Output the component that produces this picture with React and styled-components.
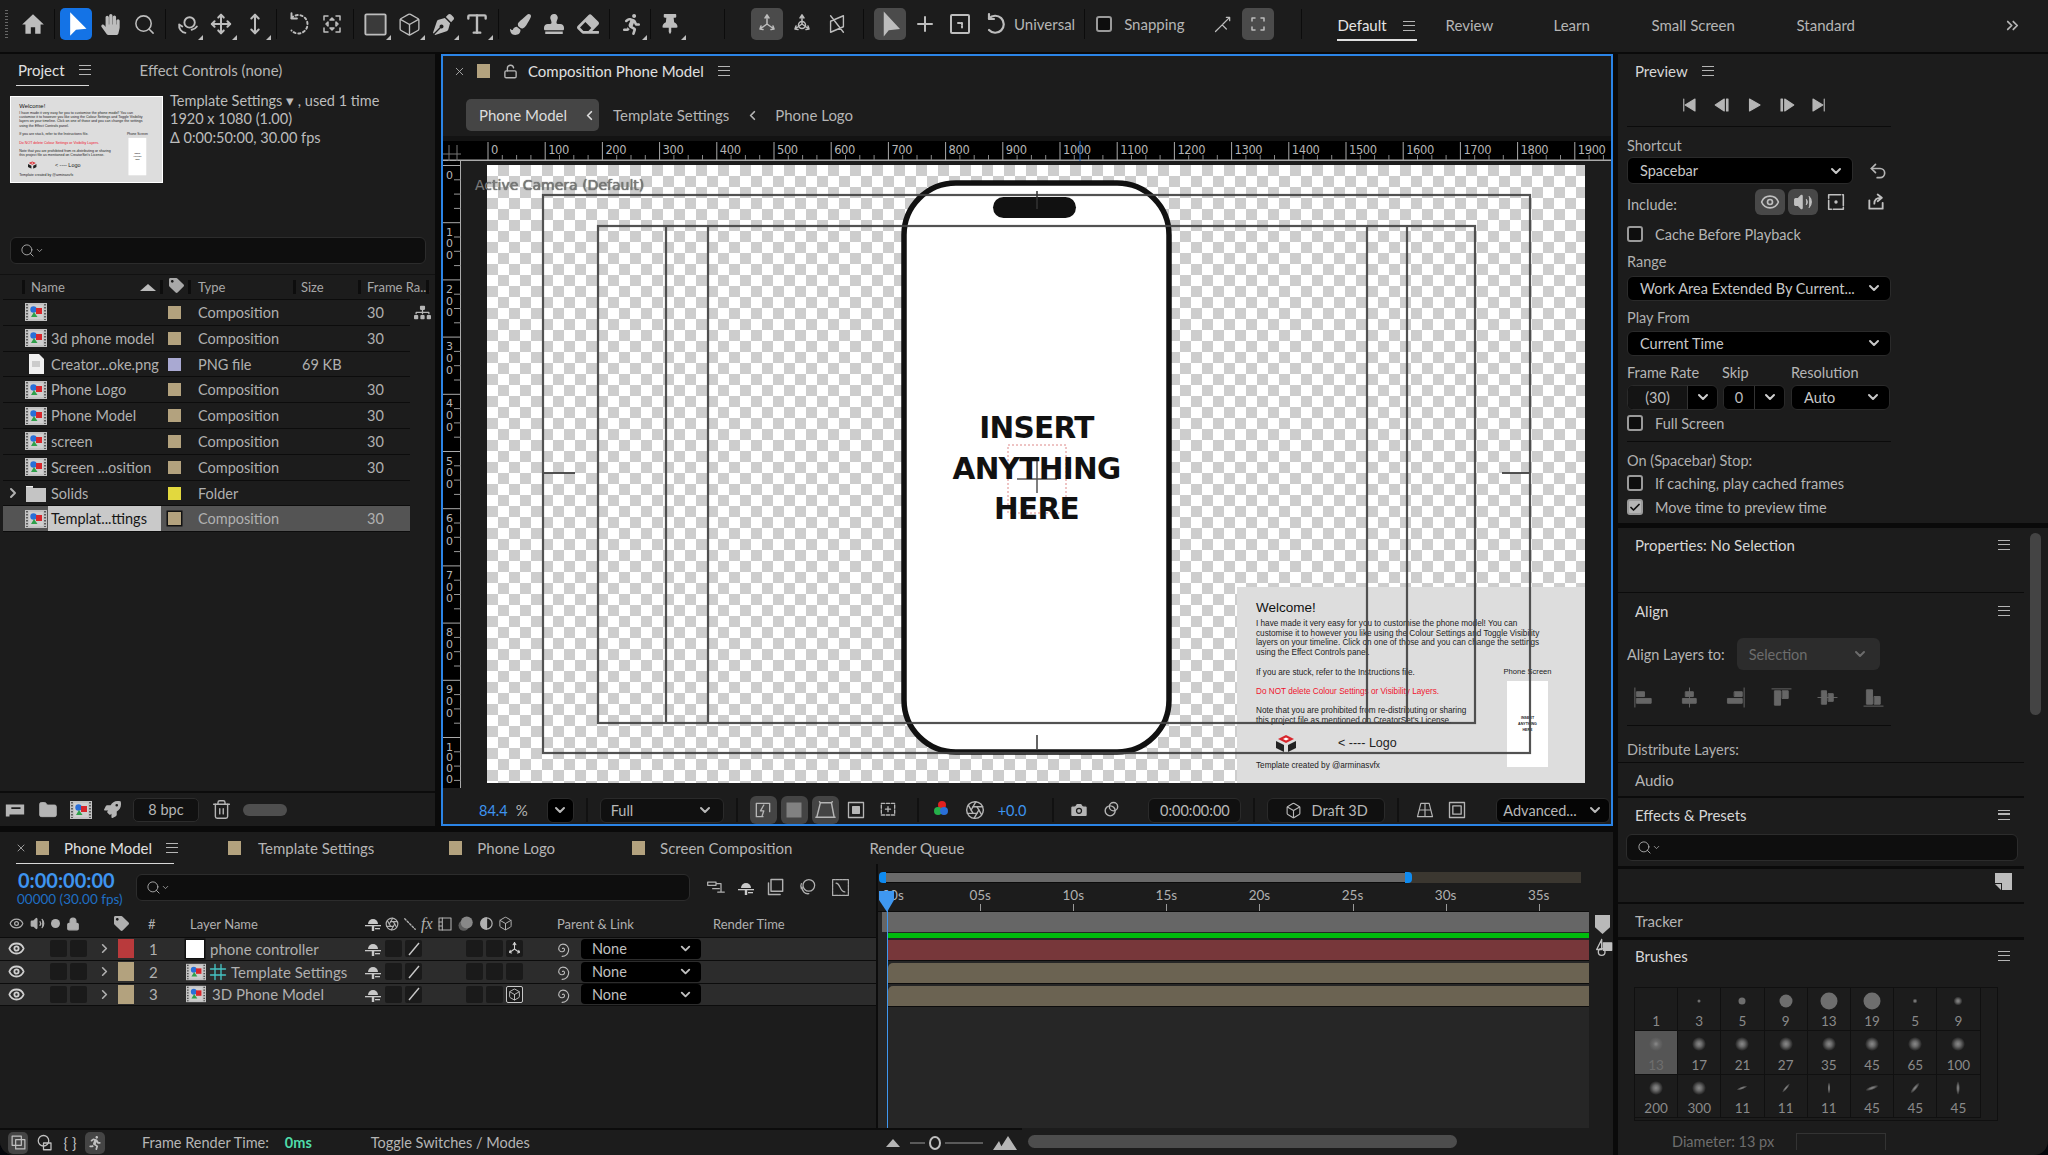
import React from 'react';
import styled, { createGlobalStyle } from 'styled-components';
import {
    Search, ChevronDown, ChevronRight, ChevronLeft, ChevronsRight, Move, MoveVertical, Box, Type, Plus,
    Undo2, Camera, Eye, Volume2, X, Lock, LockOpen, Check, Trash2, Folder, Aperture,
} from 'lucide-react';
import { FaHandPaper, FaPenNib, FaPaintBrush, FaStamp, FaEraser, FaThumbtack, FaRunning, FaTag, FaRocket, FaSitemap } from 'react-icons/fa';

const FONT = 'Lato, "Noto Sans", sans-serif';

const GlobalStyle = createGlobalStyle`
    html, body { margin: 0; padding: 0; background: #05070c; overflow: hidden; }
    * { box-sizing: border-box; }
    body { font-family: ${FONT}; font-size: 15px; color: #b9b9b9; }
`;

const Window = styled.div`
    width: 2048px;
    height: 1155px;
    display: flex;
    flex-direction: column;
    background: #0a0a0a;
    overflow: hidden;
    border-radius: 0 0 14px 14px;
`;

/* ---------- top toolbar ---------- */
const Toolbar = styled.div`
    height: 54px;
    flex: none;
    display: flex;
    align-items: center;
    padding-bottom: 4px;
    background: #1c1c1c;
    border-bottom: 2px solid #0a0a0a;
    color: #bdbdbd;
`;
const Gripper = styled.div`
    width: 3px;
    height: 28px;
    margin: 0 9px 0 5px;
    background: repeating-linear-gradient(#666 0 1px, transparent 1px 3px);
`;
const ToolGroup = styled.div`
    display: flex;
    align-items: center;
    gap: ${({ $gap }) => $gap || 2}px;
`;
const ToolSep = styled.div`
    width: 1px;
    height: 30px;
    background: #0c0c0c;
    margin: 0 ${({ $r }) => $r || 5}px 0 ${({ $l }) => $l || 5}px;
`;
const ToolBtn = styled.div`
    position: relative;
    width: 32px;
    height: 32px;
    flex: none;
    display: flex;
    align-items: center;
    justify-content: center;
    border-radius: 5px;
    margin-left: ${({ $l }) => $l || 0}px;
    color: ${({ $tone }) => ($tone === 'blue' ? '#fff' : '#bdbdbd')};
    background: ${({ $tone }) => ($tone === 'blue' ? '#1473e6' : $tone === 'on' ? '#4b4b4b' : 'transparent')};
    ${({ $fly }) => $fly && `
        &::after {
            content: '';
            position: absolute;
            right: 0;
            bottom: 0;
            border-style: solid;
            border-width: 0 0 5px 5px;
            border-color: transparent transparent #bdbdbd transparent;
        }
    `}
`;
const ToolText = styled.span`
    font-size: 15px;
    color: #b5b5b5;
    margin-left: ${({ $l }) => $l || 0}px;
`;
const Checkbox = styled.span`
    width: 16px;
    height: 16px;
    flex: none;
    display: inline-flex;
    align-items: center;
    justify-content: center;
    border: 2px solid #9a9a9a;
    border-radius: 3px;
    background: ${({ $on }) => ($on ? '#b5b5b5' : '#0e0e0e')};
    color: #111;
`;
const Workspaces = styled.div`
    display: flex;
    height: 52px;
    align-items: center;
    position: relative;
    flex: 1;
    margin-top: 4px;
`;
const WsTab = styled.div`
    position: absolute;
    top: 16px;
    left: ${({ $x }) => $x}px;
    font-size: 15px;
    white-space: nowrap;
    color: ${({ $on }) => ($on ? '#e4e4e4' : '#b5b5b5')};
`;
const WsUnderline = styled.div`
    position: absolute;
    left: 30px;
    top: 39px;
    width: 80px;
    height: 2px;
    background: #e0e0e0;
`;

const Burger = styled.span`
    display: inline-block;
    flex: none;
    width: 12px;
    height: 10px;
    border-top: 1.5px solid #b5b5b5;
    border-bottom: 1.5px solid #b5b5b5;
    position: relative;
    margin-left: ${({ $l }) => $l || 0}px;
    &::after {
        content: '';
        position: absolute;
        left: 0;
        right: 0;
        top: 2.75px;
        height: 1.5px;
        background: #b5b5b5;
    }
`;

/* ---------- main layout ---------- */
const Workspace = styled.div`
    flex: 1;
    display: flex;
    gap: 5px;
    min-height: 0;
`;
const LeftStack = styled.div`
    width: 1613px;
    flex: none;
    display: flex;
    flex-direction: column;
    gap: 6px;
`;
const TopRow = styled.div`
    height: 772px;
    flex: none;
    display: flex;
    gap: 6px;
`;

/* ---------- project panel ---------- */
const ProjectPanel = styled.section`
    width: 435px;
    flex: none;
    background: #1c1c1c;
    display: flex;
    flex-direction: column;
    position: relative;
`;
const TabStrip = styled.div`
    height: ${({ $h }) => $h || 32}px;
    flex: none;
    display: flex;
    align-items: center;
    position: relative;
`;
const TabLabel = styled.span`
    font-size: 15px;
    white-space: nowrap;
    color: ${({ $on }) => ($on ? '#e0e0e0' : '#b5b5b5')};
    margin-left: ${({ $l }) => $l || 0}px;
`;
const TabUnderline = styled.div`
    position: absolute;
    bottom: 0;
    left: ${({ $x }) => $x}px;
    width: ${({ $w }) => $w}px;
    height: 1.5px;
    background: #d8d8d8;
`;
const InfoRow = styled.div`
    display: flex;
    height: 151px;
    flex: none;
    padding: 10px 0 0 10px;
`;
const Thumb = styled.div`
    width: 153px;
    height: 87px;
    flex: none;
    overflow: hidden;
    border: 1.5px solid #fff;
    background: #ddd;
`;
const ThumbScale = styled.div`
    transform: scale(0.435);
    transform-origin: 0 0;
`;
const InfoText = styled.div`
    margin: -4px 0 0 7px;
    font-size: 14.5px;
    line-height: 18.3px;
    color: #bdbdbd;
`;
const SearchBox = styled.div`
    height: 27px;
    flex: none;
    margin: ${({ $m }) => $m || '0 9px 0 10px'};
    width: ${({ $w }) => ($w ? `${$w}px` : 'auto')};
    display: flex;
    align-items: center;
    padding-left: ${({ $p }) => $p || 9}px;
    background: #0e0e0e;
    border: 1.5px solid #2c2c2c;
    border-radius: 6px;
    color: #b5b5b5;
`;
const FileHead = styled.div`
    height: 25px;
    margin-top: 10px;
    flex: none;
    position: relative;
    font-size: 13px;
    color: #a8a8a8;
    border-top: 1px solid #111;
`;
const HeadCell = styled.span`
    position: absolute;
    top: ${({ $t }) => $t || 4}px;
    left: ${({ $x }) => $x}px;
    display: inline-flex;
    align-items: center;
    white-space: nowrap;
`;
const HeadBar = styled.span`
    position: absolute;
    top: 5px;
    left: ${({ $x }) => $x}px;
    width: 3px;
    height: 14px;
    background: #0d0d0d;
`;
const FileList = styled.div`
    width: 407px;
    margin-left: 3px;
    flex: none;
    border-top: 1px solid #0c0c0c;
`;
const FileRow = styled.div`
    height: 25.8px;
    display: grid;
    grid-template-columns: 20px 25px 113px 7px 14px 16px 104px 65px 43px;
    align-items: center;
    border-bottom: 1px solid #0c0c0c;
    font-size: 14.5px;
    color: #b0b0b0;
    background: ${({ $sel }) => ($sel ? '#545454' : 'transparent')};
`;
const FileCell = styled.span`
    display: flex;
    justify-content: ${({ $center }) => ($center ? 'center' : 'flex-start')};
    padding-left: ${({ $p }) => $p || 0}px;
`;
const FileName = styled.span`
    display: block;
    height: 100%;
    line-height: 25px;
    white-space: nowrap;
    padding-left: 3px;
    background: ${({ $sel }) => ($sel ? '#c9c9c9' : 'transparent')};
    color: ${({ $sel }) => ($sel ? '#161616' : '#b0b0b0')};
`;
const Swatch = styled.span`
    display: block;
    flex: none;
    width: ${({ $w }) => $w || 13}px;
    height: ${({ $h }) => $h || 13}px;
    margin-left: ${({ $l }) => $l || 0}px;
    background: ${({ $c }) => $c};
    border-radius: ${({ $round }) => ($round ? '50%' : 0)};
    box-shadow: ${({ $dark }) => ($dark ? '0 0 0 1.5px #111' : 'none')};
`;
const HierIcon = styled.span`
    position: absolute;
    right: 4px;
    top: 250px;
    color: #b5b5b5;
    display: flex;
`;
const ProjectFoot = styled.div`
    margin-top: auto;
    height: 35px;
    flex: none;
    display: flex;
    align-items: center;
    padding-left: 4px;
    gap: 12px;
    border-top: 2px solid #0c0c0c;
    color: #b5b5b5;
`;
const BpcBox = styled.span`
    width: 66px;
    height: 24px;
    border: 1.5px solid #2c2c2c;
    border-radius: 5px;
    background: #111;
    text-align: center;
    line-height: 21px;
    font-size: 14.5px;
`;
const PillSlider = styled.span`
    width: 44px;
    height: 12px;
    border-radius: 6px;
    background: #4e4e4e;
    margin-left: -1px;
`;

/* ---------- composition panel ---------- */
const CompPanel = styled.section`
    flex: 1;
    min-width: 0;
    display: flex;
    flex-direction: column;
    border: 2px solid #2b84e6;
    background: #1c1c1c;
`;
const CompHead = styled.div`
    height: 38px;
    flex: none;
    display: flex;
    align-items: center;
    padding: 0 0 8px 10px;
    color: #b5b5b5;
`;
const Crumbs = styled.div`
    height: 42px;
    flex: none;
    display: flex;
    align-items: center;
    padding-left: 23px;
    font-size: 15px;
    color: #b5b5b5;
`;
const CrumbChip = styled.div`
    width: 133px;
    height: 32px;
    display: flex;
    align-items: center;
    justify-content: space-between;
    padding: 0 2px 0 13px;
    border-radius: 5px;
    background: #454545;
    color: #dcdcdc;
`;
const RulerGap = styled.div`
    height: 5px;
    flex: none;
    background: #131313;
`;
const RulerBar = styled.svg`
    display: block;
    flex: none;
    background: #000;
`;
const ViewRow = styled.div`
    height: 627px;
    flex: none;
    display: flex;
`;
const ViewArea = styled.div`
    position: relative;
    flex: 1;
    padding: 4px 0 0 26px;
`;
const Canvas = styled.div`
    position: relative;
    width: 1098px;
    height: 618px;
    background: conic-gradient(#cdcdcd 25%, #fff 0 50%, #cdcdcd 0 75%, #fff 0) 0 0 / 22px 22px;
`;
const CameraLabel = styled.div`
    position: absolute;
    left: 14px;
    top: 16px;
    font: 14px "DejaVu Sans", sans-serif;
    color: #7a7a7a;
    text-shadow: 0 0 1px #333;
    white-space: nowrap;
`;
const CardSpot = styled.div`
    position: absolute;
    left: 750px;
    top: 422px;
`;
const Card = styled.div`
    width: 348px;
    height: 196px;
    padding: 12px 0 0 19px;
    display: grid;
    grid-template-columns: 251px 41px;
    background: #ddd;
    font-family: "Liberation Sans", Arial, sans-serif;
    color: #222;
`;
const CardTitle = styled.div`
    font-size: 13.5px;
    line-height: 17px;
    color: #111;
    margin-bottom: 3px;
`;
const CardText = styled.p`
    margin: 0 0 9.7px;
    width: 320px;
    font-size: 8.2px;
    line-height: 9.7px;
    white-space: nowrap;
    color: ${({ $red }) => ($red ? '#f0142d' : '#222')};
`;
const CardLogo = styled.div`
    display: flex;
    align-items: center;
    margin-top: -3px;
    height: 22px;
    padding-left: 20px;
    font-size: 12.5px;
    color: #222;
    gap: 42px;
`;
const CardFoot = styled.div`
    margin-top: 7px;
    font-size: 8.2px;
`;
const CardSide = styled.div`
    padding-top: 68px;
    text-align: center;
    grid-column: 2;
    grid-row: 1;
`;
const SideLabel = styled.div`
    font-size: 7.6px;
    white-space: nowrap;
    margin: 0 -10px 5px;
    line-height: 9px;
`;
const SideScreen = styled.div`
    width: 41px;
    height: 86px;
    background: #fff;
    display: flex;
    align-items: center;
    justify-content: center;
    font-size: 3.6px;
    line-height: 6px;
    font-weight: 700;
    color: #222;
`;
const CardMain = styled.div`
    grid-column: 1;
    grid-row: 1;
`;
const Wire = styled.svg`
    position: absolute;
    left: 0;
    top: 0;
`;
const InsertText = styled.div`
    position: absolute;
    left: 417px;
    top: 243px;
    width: 265px;
    text-align: center;
    font: 700 29.5px/40.5px "DejaVu Sans", sans-serif;
    letter-spacing: -0.7px;
    color: #111;
`;
const CompBar = styled.div`
    height: 36px;
    flex: none;
    display: flex;
    align-items: center;
    padding-top: 8px;
    color: #b5b5b5;
    font-size: 15px;
`;
const BlueNum = styled.span`
    color: #3e94ef;
    font-size: 14.5px;
    margin-left: ${({ $l }) => $l || 0}px;
`;
const BarText = styled.span`
    margin-left: ${({ $l }) => $l || 0}px;
`;
const DarkBox = styled.div`
    width: ${({ $w }) => $w}px;
    height: 25px;
    flex: none;
    display: flex;
    align-items: center;
    justify-content: ${({ $j }) => $j || 'space-between'};
    gap: 6px;
    padding: 0 ${({ $p }) => ($p === undefined ? 10 : $p)}px;
    margin-left: ${({ $l }) => $l || 0}px;
    border: 1.5px solid #2a2a2a;
    border-radius: 6px;
    background: ${({ $bg }) => $bg || '#101010'};
    color: #b8b8b8;
    font-size: 14.5px;
    white-space: nowrap;
`;
const BarSep = styled.div`
    width: 2px;
    height: 24px;
    flex: none;
    background: #111;
    margin-left: ${({ $l }) => $l || 12}px;
`;
const BarBtn = styled.div`
    width: 27px;
    height: 28px;
    flex: none;
    display: flex;
    align-items: center;
    justify-content: center;
    border-radius: 6px;
    margin-left: ${({ $l }) => $l || 4}px;
    background: ${({ $on }) => ($on ? '#444' : 'transparent')};
    color: #b5b5b5;
`;

/* ---------- timeline ---------- */
const Timeline = styled.section`
    flex: 1;
    min-height: 0;
    display: flex;
    flex-direction: column;
    background: #1c1c1c;
`;
const TlSwatch = styled.span`
    width: 13px;
    height: 14px;
    flex: none;
    background: #b3a27e;
    margin-left: ${({ $l }) => $l || 0}px;
`;
const TlBody = styled.div`
    flex: 1;
    min-height: 0;
    display: flex;
`;
const TlLeft = styled.div`
    width: 878px;
    flex: none;
    display: flex;
    flex-direction: column;
    border-right: 2px solid #0c0c0c;
`;
const TimeRow = styled.div`
    height: 46px;
    flex: none;
    display: flex;
    align-items: center;
`;
const TimeBlock = styled.div`
    width: 136px;
    flex: none;
    padding: 2px 0 0 17px;
`;
const BigTime = styled.div`
    font-size: 20px;
    line-height: 22px;
    font-weight: 700;
    color: #3e94ef;
    padding-left: 1px;
`;
const SubTime = styled.div`
    font-size: 13.5px;
    line-height: 16px;
    color: #1f6fc4;
`;
const ColHead = styled.div`
    height: 28px;
    flex: none;
    display: flex;
    align-items: center;
    font-size: 13px;
    color: #a8a8a8;
    border-bottom: 1.5px solid #0c0c0c;
`;
const Sect = styled.div`
    width: ${({ $w }) => $w}px;
    flex: none;
    height: 100%;
    display: flex;
    align-items: center;
    gap: ${({ $gap }) => $gap || 0}px;
    padding-left: ${({ $p }) => $p || 0}px;
    white-space: nowrap;
    color: #b0b0b0;
`;
const LayerRow = styled.div`
    height: 22.8px;
    flex: none;
    display: flex;
    align-items: center;
    background: #2c2c2c;
    border-bottom: 1.5px solid #0c0c0c;
    font-size: 15px;
`;
const Slot = styled.span`
    width: 17px;
    height: 17px;
    flex: none;
    display: inline-flex;
    align-items: center;
    justify-content: center;
    background: #1a1a1a;
    border-radius: 2px;
    margin-left: ${({ $l }) => $l || 0}px;
    color: #cfcfcf;
    ${({ $boxed }) => $boxed && 'border: 1.5px solid #c8c8c8;'}
`;
const NoneSelect = styled.div`
    width: 120px;
    height: 20px;
    margin-left: 9px;
    display: flex;
    align-items: center;
    justify-content: space-between;
    padding: 0 8px 0 11px;
    border-radius: 4px;
    background: #000;
    color: #c0c0c0;
    font-size: 14.5px;
`;
const LayerName = styled.span`
    margin-left: ${({ $l }) => $l || 0}px;
`;
const Fx = styled.i`
    font-family: "Liberation Serif", serif;
    font-size: 16px;
`;
const Graph = styled.div`
    flex: 1;
    display: flex;
    position: relative;
    min-width: 0;
`;
const GraphTrack = styled.div`
    width: 711px;
    flex: none;
    display: flex;
    flex-direction: column;
    background: #262626;
    overflow: hidden;
`;
const NavShelf = styled.div`
    height: 19px;
    flex: none;
    background: #1c1c1c;
`;
const NavStrip = styled.div`
    position: relative;
    height: 11px;
    top: 8px;
    margin: 0 8px 0 3px;
    background: #3b3730;
`;
const NavFill = styled.div`
    height: 100%;
    width: 524px;
    background: #6a6a6a;
    border-top: 1px solid #0c0c0c;
    border-bottom: 1px solid #0c0c0c;
`;
const NavHandle = styled.span`
    position: absolute;
    left: ${({ $x }) => $x}px;
    top: 0;
    width: 7px;
    height: 11px;
    background: #0f8bf0;
    border-radius: ${({ $r }) => ($r ? '0 4px 4px 0' : '4px 0 0 4px')};
`;
const TimeLabels = styled.div`
    display: flex;
    height: 29px;
    flex: none;
    margin-left: -37.5px;
    background: #1c1c1c;
    border-bottom: 1.5px solid #0c0c0c;
`;
const TimeLabel = styled.div`
    width: 93.1px;
    flex: none;
    text-align: center;
    font-size: 13.5px;
    line-height: 25px;
    height: 28px;
    padding-left: ${({ $first }) => ($first ? 12 : 0)}px;
    color: #b0b0b0;
    position: relative;
    &::after {
        content: '';
        position: absolute;
        left: 50%;
        bottom: 0;
        width: 1px;
        height: 7px;
        background: #999;
    }
`;
const WorkBar = styled.div`
    height: 20px;
    flex: none;
    margin-left: 4px;
    background: #666;
    position: relative;
`;
const GreenBar = styled.div`
    height: 5px;
    margin-top: 1px;
    flex: none;
    margin-left: 9px;
    background: #00bb0c;
`;
const LayerBar = styled.div`
    height: 21px;
    flex: none;
    margin: 2px 0 0 10px;
    background: ${({ $c }) => $c};
    border-bottom: 1px solid #0c0c0c;
    border-top-left-radius: ${({ $round }) => ($round ? 5 : 0)}px;
`;
const Playhead = styled.div`
    position: absolute;
    left: 9px;
    top: 26px;
    width: 1px;
    bottom: 0;
    background: #3f97f0;
`;
const PlayheadCap = styled.svg`
    position: absolute;
    left: 1px;
    top: 27px;
`;
const SideMarks = styled.div`
    flex: 1;
    padding: 51px 0 0 6px;
    color: #c0c0c0;
`;
const Marker = styled.div`
    width: 15px;
    height: 19px;
    background: #b9b9b9;
    clip-path: polygon(0 0, 100% 0, 100% 65%, 50% 100%, 0 65%);
    margin-bottom: 3px;
`;
const TlFoot = styled.div`
    height: 27px;
    flex: none;
    display: flex;
    align-items: center;
    background: #1c1c1c;
`;
const FootLeft = styled.div`
    width: 1022px;
    height: 100%;
    flex: none;
    display: flex;
    align-items: center;
    border-top: 2px solid #0c0c0c;
    font-size: 14.5px;
    color: #b5b5b5;
`;
const FootBtn = styled.span`
    width: 20px;
    height: 22px;
    flex: none;
    display: inline-flex;
    align-items: center;
    justify-content: center;
    border-radius: 5px;
    margin-left: ${({ $l }) => $l || 5}px;
    background: ${({ $on }) => ($on ? '#454545' : 'transparent')};
    color: #c0c0c0;
    font-size: 15px;
`;
const GreenNum = styled.span`
    color: #4fdcaa;
    font-weight: 700;
    margin-left: 16px;
`;
const ZoomSmall = styled.svg`
    margin-left: 356px;
    flex: none;
`;
const ZoomBig = styled.svg`
    margin-left: 10px;
    flex: none;
`;
const ZoomTrack = styled.span`
    height: 2px;
    width: ${({ $w }) => $w}px;
    background: #5a5a5a;
    margin-left: ${({ $l }) => $l || 4}px;
`;
const ZoomKnob = styled.span`
    width: 12px;
    height: 14px;
    border: 2.5px solid #c0c0c0;
    border-radius: 50%;
    margin-left: 4px;
`;
const ScrollPill = styled.div`
    width: 429px;
    height: 13px;
    margin-left: 6px;
    border-radius: 7px;
    background: #4d4d4d;
`;

/* ---------- right dock ---------- */
const RightDock = styled.aside`
    flex: 1;
    min-width: 0;
    display: flex;
    flex-direction: column;
    gap: 5px;
`;
const DockSection = styled.section`
    background: #1c1c1c;
    flex: ${({ $grow }) => ($grow ? 1 : 'none')};
    height: ${({ $h }) => ($h ? `${$h}px` : 'auto')};
    min-height: 0;
    padding-left: ${({ $p }) => $p || 0}px;
    position: relative;
    font-size: 14.5px;
    color: #b5b5b5;
`;
const PanelHead = styled.div`
    height: ${({ $h }) => $h || 34}px;
    display: flex;
    align-items: center;
    justify-content: space-between;
    padding: 0 14px 0 ${({ $p }) => $p || 17}px;
    font-size: 15px;
    color: ${({ $dim }) => ($dim ? '#b5b5b5' : '#d6d6d6')};
`;
const PanelHeadLeft = styled.div`
    display: flex;
    align-items: center;
`;
const Transport = styled.div`
    height: 38px;
    display: flex;
    align-items: center;
    gap: 14.5px;
    padding: 0 0 5px 53px;
    color: #b5b5b5;
`;
const Rule = styled.div`
    width: ${({ $w }) => ($w ? `${$w}px` : 'auto')};
    height: ${({ $t }) => $t || 1}px;
    margin-top: ${({ $mt }) => $mt || 0}px;
    background: #0b0b0b;
`;
const Label = styled.div`
    height: 18px;
    line-height: 18px;
    margin-top: ${({ $mt }) => $mt || 0}px;
    color: #b0b0b0;
    white-space: nowrap;
`;
const PickBox = styled.div`
    width: ${({ $w }) => $w}px;
    height: ${({ $h }) => $h || 26}px;
    margin-top: ${({ $mt }) => $mt || 0}px;
    margin-left: ${({ $l }) => $l || 0}px;
    flex: none;
    display: flex;
    align-items: center;
    justify-content: space-between;
    padding: 0 8px 0 12px;
    border: 1.5px solid #2a2a2a;
    border-radius: 6px;
    background: #000;
    color: #c8c8c8;
    white-space: nowrap;
`;
const FlexRow = styled.div`
    display: flex;
    align-items: center;
    height: ${({ $h }) => $h || 24}px;
    margin-top: ${({ $mt }) => $mt || 0}px;
    gap: ${({ $gap }) => $gap || 0}px;
`;
const RowCaption = styled.span`
    width: ${({ $w }) => $w}px;
    padding-top: ${({ $t }) => $t || 0}px;
    flex: none;
`;
const ToggleBtn = styled.div`
    width: 30px;
    height: 26px;
    display: flex;
    align-items: center;
    justify-content: center;
    border-radius: 6px;
    margin-left: ${({ $l }) => $l || 0}px;
    background: ${({ $on }) => ($on ? '#484848' : 'transparent')};
    color: #c0c0c0;
`;
const CheckLabel = styled.span`
    margin-left: 12px;
`;
const SplitBox = styled.div`
    width: ${({ $w }) => $w}px;
    height: 25px;
    flex: none;
    display: grid;
    grid-template-columns: ${({ $left }) => $left}px 1fr;
    border: 1.5px solid #2a2a2a;
    border-radius: 6px;
    background: #000;
    overflow: hidden;
    margin-left: ${({ $l }) => $l || 0}px;
    color: #bdbdbd;
`;
const SplitValue = styled.span`
    display: flex;
    align-items: center;
    justify-content: center;
    background: ${({ $bg }) => $bg || '#141414'};
    border-right: 1px solid #333;
`;
const SplitArrow = styled.span`
    display: flex;
    align-items: center;
    justify-content: center;
    color: #d0d0d0;
`;
const LowerDock = styled.div`
    display: flex;
    flex-direction: column;
    width: 406px;
    height: 100%;
`;
const ScrollThumb = styled.div`
    position: absolute;
    left: 412px;
    top: 5px;
    width: 11px;
    height: 182px;
    border-radius: 6px;
    background: #444;
`;
const Indent = styled.div`
    padding-left: 9px;
`;
const MutedSelect = styled.div`
    width: 143px;
    height: 32px;
    margin-left: 12px;
    display: flex;
    align-items: center;
    justify-content: space-between;
    padding: 0 12px;
    border-radius: 6px;
    background: #2c2c2c;
    color: #6c6c6c;
`;
const AlignIcons = styled.div`
    display: flex;
    gap: 23px;
    height: 30px;
    align-items: center;
    margin-top: 12px;
    padding-left: 5px;
    color: #666;
`;
const PresetStrip = styled.div`
    height: 33px;
    display: flex;
    align-items: center;
    justify-content: flex-end;
    padding: 0 12px 8px 0;
    color: #c0c0c0;
`;
const BrushGrid = styled.div`
    width: 364px;
    margin: 15px 0 0 16px;
    height: 134px;
    display: grid;
    grid-template-columns: repeat(8, 43.2px);
    grid-auto-rows: 43.3px;
    border: 1px solid #101010;
    background: #1c1c1c;
`;
const BrushCell = styled.div`
    position: relative;
    border-right: 1px solid #101010;
    border-bottom: 1px solid #101010;
    background: ${({ $sel }) => ($sel ? '#555' : 'transparent')};
`;
const BrushDot = styled.span`
    position: absolute;
    left: 50%;
    top: 13px;
    width: ${({ $w }) => $w}px;
    height: ${({ $h }) => $h}px;
    transform: translate(-50%, -50%) rotate(${({ $rot }) => $rot || 0}deg);
    border-radius: 50%;
    background: ${({ $soft }) => ($soft ? 'radial-gradient(closest-side, #8a8a8a, #6a6a6a 40%, transparent)' : '#6e6e6e')};
`;
const BrushNum = styled.span`
    position: absolute;
    left: 0;
    right: 0;
    bottom: 1px;
    text-align: center;
    font-size: 13.5px;
    line-height: 16px;
    color: ${({ $sel }) => ($sel ? '#6e6e6e' : '#8a8a8a')};
`;
const DiameterRow = styled.div`
    display: flex;
    align-items: flex-start;
    margin-top: 12px;
    padding-left: 54px;
    color: #6e6e6e;
`;
const DiameterBox = styled.div`
    width: 90px;
    height: 17px;
    margin-left: 22px;
    border: 1px solid #333;
    border-bottom: 0;
`;

/* ---------- small drawings ---------- */
const Ico = ({ s = 22, sw = 1.8, fill = 'none', children }) => (
    <svg width={s} height={s} viewBox="0 0 24 24" fill={fill} stroke={fill === 'none' ? 'currentColor' : 'none'} strokeWidth={sw} strokeLinecap="round" strokeLinejoin="round">
        {children}
    </svg>
);
const Filled = ({ s, d }) => <Ico s={s} fill="currentColor"><path d={d} /></Ico>;

const CompIcon = ({ w = 22, h = 18 }) => (
    <svg width={w} height={h} viewBox="0 0 22 18">
        <rect width="22" height="18" fill="#c2c2c2" />
        <path d="M2 1v16M20 1v16" stroke="#444" strokeWidth="1.6" strokeDasharray="1.5 1.5" />
        <rect x="4" y="2" width="14" height="14" fill="#cfcfcf" />
        <circle cx="8.5" cy="6.5" r="3.2" fill="#2a6fd8" />
        <rect x="11" y="5" width="6" height="6" fill="#d8262c" />
        <path d="M6 14 l3 -5 l3.5 5z" fill="#2fa04a" />
    </svg>
);
const FileIcon = () => (
    <svg width="16" height="20" viewBox="0 0 16 20">
        <path d="M1 0h10l5 5v15H1z" fill="#f0f0f0" />
        <rect x="4" y="7" width="8" height="6" fill="#ccc" />
    </svg>
);
const FolderIcon = () => (
    <svg width="20" height="17" viewBox="0 0 20 17">
        <path d="M0 2h7v1h13v14H0z" fill="#c4c4c4" />
        <path d="M0 1h7v1H0z" fill="#eee" />
    </svg>
);
const AxisIcon = ({ ring }) => (
    <Ico s={24} sw={1.5}>
        <path d="M12 3v9M12 12l-7 5M12 12l7 5M12 3l-2 3M12 3l2 3M5 17l1-3M5 17l3 .6M19 17l-1-3M19 17l-3 .6" />
        {ring && <circle cx="12" cy="13" r="3.5" />}
    </Ico>
);
const ShyIcon = () => (
    <svg width="16" height="15" viewBox="0 0 16 15" fill="#c8c8c8">
        <path d="M3 8a5 5 0 0 1 10 0z" />
        <rect x="0" y="9" width="16" height="1.3" />
        <rect x="6.8" y="10" width="2.4" height="5" />
        <rect x="10" y="12" width="5" height="1.3" />
    </svg>
);
const SpiralIcon = () => (
    <Ico s={19} sw={1.4}>
        <path d="M12 12c1-1 3 0 2.5 2-.5 2.5-4.5 3-6.5.5-2-3 0-8 4.5-8 5 0 8 4 7 9-1 4-4 6-8 6.5" />
    </Ico>
);
const SlashIcon = () => (
    <svg width="14" height="14" viewBox="0 0 14 14"><path d="M2 13 12 1" stroke="#c8c8c8" strokeWidth="1.4" /></svg>
);
const CubeLogo = () => (
    <svg width="20" height="18" viewBox="0 0 20 18">
        <path d="M2 5 10 1l8 4-8 4z" fill="#d8262c" />
        <path d="M0 7l8 4v7l-8-4zM20 7l-8 4v7l8-4z" fill="#222" />
        <path d="M7 5l3-1.5L13 5l-3 1.5z" fill="#fff" />
    </svg>
);

const Chev = ({ s = 16, w = 3 }) => <ChevronDown size={s} strokeWidth={w} />;
const SearchGlyph = () => (
    <>
        <Search size={15} strokeWidth={1.4} />
        <ChevronDown size={9} strokeWidth={2} />
    </>
);

/* ---------- data ---------- */
const TAN = '#b3a27e';
const files = [
    { name: '', type: 'Composition', fr: '30', color: TAN },
    { name: '3d phone model', type: 'Composition', fr: '30', color: TAN },
    { name: 'Creator...oke.png', type: 'PNG file', size: '69 KB', color: '#a9a9d2', kind: 'file' },
    { name: 'Phone Logo', type: 'Composition', fr: '30', color: TAN },
    { name: 'Phone Model', type: 'Composition', fr: '30', color: TAN },
    { name: 'screen', type: 'Composition', fr: '30', color: TAN },
    { name: 'Screen ...osition', type: 'Composition', fr: '30', color: TAN },
    { name: 'Solids', type: 'Folder', color: '#e2d83e', kind: 'folder' },
    { name: 'Templat...ttings', type: 'Composition', fr: '30', color: TAN, sel: true },
];

const layers = [
    { n: 1, name: 'phone controller', color: '#b93a3c', solid: true, mode: 'axis' },
    { n: 2, name: 'Template Settings', color: TAN, grid: true },
    { n: 3, name: '3D Phone Model', color: TAN, mode: 'cube' },
];

const brushes = [
    { n: 1, w: 0, h: 0 }, { n: 3, w: 3, h: 3 }, { n: 5, w: 7, h: 7 }, { n: 9, w: 13, h: 13 },
    { n: 13, w: 17, h: 17 }, { n: 19, w: 17, h: 17 }, { n: 5, w: 5, h: 5, soft: true }, { n: 9, w: 9, h: 9, soft: true },
    { n: 13, w: 14, h: 14, soft: true, sel: true }, { n: 17, w: 14, h: 14, soft: true }, { n: 21, w: 14, h: 14, soft: true },
    { n: 27, w: 14, h: 14, soft: true }, { n: 35, w: 14, h: 14, soft: true }, { n: 45, w: 14, h: 14, soft: true },
    { n: 65, w: 14, h: 14, soft: true }, { n: 100, w: 14, h: 14, soft: true },
    { n: 200, w: 14, h: 14, soft: true }, { n: 300, w: 14, h: 14, soft: true },
    { n: 11, w: 12, h: 3, rot: -20, soft: true }, { n: 11, w: 12, h: 3, rot: -50, soft: true }, { n: 11, w: 12, h: 3, rot: -90, soft: true },
    { n: 45, w: 14, h: 4, rot: -20, soft: true }, { n: 45, w: 14, h: 4, rot: -50, soft: true }, { n: 45, w: 14, h: 4, rot: -90, soft: true },
];

const alignPaths = [
    'M3 2v20M5 6h8v5H5zM5 13h15v5H5z',
    'M12 2v20M8 6h8v5H8zM5 13h14v5H5z',
    'M21 2v20M11 6h8v5h-8zM4 13h15v5H4z',
    'M2 3h20M5 5h6v15H5zM13 5h6v8h-6z',
    'M2 12h20M6 5h5v14H6zM13 8h5v8h-5z',
    'M2 21h20M5 4h6v15H5zM13 11h6v8h-6z',
];
const transportPaths = [
    'M5 4v16M20 4 7 12l13 8z',
    'M20 4v16h-2V4zM15 4 3 12l12 8z',
    'M6 4l14 8-14 8z',
    'M4 4v16h2V4zM9 4l12 8-12 8z',
    'M19 4v16M4 4l13 8-13 8z',
];

/* ---------- parts ---------- */
const HRuler = () => {
    const ticks = [];
    for (let i = 0; i < 20 * 4; i++) {
        const x = 45 + i * 14.3;
        const major = i % 4 === 0;
        ticks.push(<line key={i} x1={x} x2={x} y1={major ? 1 : 14} y2={19} stroke={major ? '#aaa' : '#888'} />);
        if (major) {
            ticks.push(
                <text key={`t${i}`} x={x + 3} y={13} fontSize="11.5" fontFamily="DejaVu Sans" fill="#b5b5b5" letterSpacing="-0.4">
                    {(i / 4) * 100}
                </text>
            );
        }
    }
    return (
        <RulerBar width="1168" height="20">
            <rect y="18.5" width="1168" height="1.5" fill="#aaa" />
            <path d="M0 13h18M6 4v16M14 4v16" stroke="#777" fill="none" />
            {ticks}
            <line x1="637" x2="637" y1="0" y2="20" stroke="#1f6fd8" />
        </RulerBar>
    );
};

const VRuler = () => {
    const parts = [];
    for (let i = 0; i <= 43; i++) {
        const y = 4.5 + i * 14.3;
        const major = i % 4 === 0;
        parts.push(<line key={i} x1={major ? 0 : 11} x2={18} y1={y} y2={y} stroke={major ? '#aaa' : '#999'} />);
        if (major) {
            const label = i === 0 ? '0' : String((i / 4) * 100);
            const step = label.length > 3 ? 10.8 : 11.7;
            label.split('').forEach((ch, k) => {
                parts.push(
                    <text key={`${i}-${k}`} x={3} y={y + 13 + k * step} fontSize="11" fontFamily="DejaVu Sans" fill="#b5b5b5">
                        {ch}
                    </text>
                );
            });
        }
    }
    return (
        <RulerBar width="18" height="627">
            <line x1="17.5" x2="17.5" y1="0" y2="627" stroke="#aaa" />
            {parts}
        </RulerBar>
    );
};

const WelcomeCard = () => (
    <Card>
        <CardMain>
            <CardTitle>Welcome!</CardTitle>
            <CardText>
                I have made it very easy for you to customise the phone model! You can<br />
                customise it to however you like using the Colour Settings and Toggle Visibility<br />
                layers on your timeline. Click on one of those and you can change the settings<br />
                using the Effect Controls panel.
            </CardText>
            <CardText>If you are stuck, refer to the Instructions file.</CardText>
            <CardText $red>Do NOT delete Colour Settings or Visibility Layers.</CardText>
            <CardText>
                Note that you are prohibited from re-distributing or sharing<br />
                this project file as mentioned on CreatorSet&apos;s License.
            </CardText>
            <CardLogo><CubeLogo /><span>&lt; ---- Logo</span></CardLogo>
            <CardFoot>Template created by @arminasvfx</CardFoot>
        </CardMain>
        <CardSide>
            <SideLabel>Phone Screen</SideLabel>
            <SideScreen><div>INSERT<br />ANYTHING<br />HERE</div></SideScreen>
        </CardSide>
    </Card>
);

const WireFrame = () => (
    <Wire width="1098" height="618" fill="none">
        <rect x="417" y="18" width="265" height="569" rx="52" fill="#fff" stroke="#111" strokeWidth="5.5" />
        <g stroke="#444" strokeWidth="2.2" opacity="0.92">
            <rect x="56" y="30" width="987" height="558" />
            <rect x="111" y="61" width="877" height="497" />
            <path d="M179 61v497M221 61v497M880 61v497M920 61v497" />
            <path d="M56 308h32M1015 308h28" />
        </g>
        <rect x="506" y="32" width="83" height="21" rx="10.5" fill="#111" />
        <path d="M550 26v18M550 570v14" stroke="#333" strokeWidth="1.5" />
        <path d="M530 314h40M550 296v32" stroke="#555" strokeWidth="1.5" />
        <rect x="521" y="280" width="58" height="68" stroke="#d88" strokeDasharray="2 2" />
    </Wire>
);

const TopToolbar = () => (
    <Toolbar>
        <Gripper />
        <ToolBtn><Filled s={26} d="M12 3 2 12.5h3V21h5v-6h4v6h5v-8.5h3z" /></ToolBtn>
        <ToolSep />
        <ToolGroup>
            <ToolBtn $tone="blue"><Filled s={28} d="M7 2v20l5-5 9-1z" /></ToolBtn>
            <ToolBtn><FaHandPaper size={21} /></ToolBtn>
            <ToolBtn><Search size={23} strokeWidth={1.6} /></ToolBtn>
        </ToolGroup>
        <ToolSep />
        <ToolGroup>
            <ToolBtn $fly><Ico s={25}><circle cx="14" cy="10" r="5" /><path d="M10 20a7 7 0 0 1-6-8l3 2M16 17a7 7 0 0 0 5-3" /></Ico></ToolBtn>
            <ToolBtn $fly><Move size={22} strokeWidth={2.2} /></ToolBtn>
            <ToolBtn $fly><MoveVertical size={22} strokeWidth={2.2} /></ToolBtn>
        </ToolGroup>
        <ToolSep />
        <ToolGroup>
            <ToolBtn><Ico s={26}><path d="M6 6.5A8.5 8.5 0 1 1 6 18" strokeDasharray="2 2.5" /><path d="M6 2v5h5" /></Ico></ToolBtn>
            <ToolBtn><Ico s={24} sw={1.5}><path d="M4 8V4h4M16 4h4v4M20 16v4h-4M8 20H4v-4M12 6l-2 2h4zM12 18l-2-2h4zM6 12l2-2v4zM18 12l-2-2v4z" /></Ico></ToolBtn>
        </ToolGroup>
        <ToolSep />
        <ToolGroup>
            <ToolBtn $fly><Ico s={27} sw={1.7}><rect x="3" y="3" width="18" height="18" rx="1" fill="#3a3a3a" /></Ico></ToolBtn>
            <ToolBtn $fly><Box size={25} strokeWidth={1.3} /></ToolBtn>
            <ToolBtn $fly><FaPenNib size={21} /></ToolBtn>
            <ToolBtn $fly><Type size={26} strokeWidth={2.2} /></ToolBtn>
        </ToolGroup>
        <ToolSep />
        <ToolGroup>
            <ToolBtn><FaPaintBrush size={21} /></ToolBtn>
            <ToolBtn><FaStamp size={20} /></ToolBtn>
            <ToolBtn><FaEraser size={22} /></ToolBtn>
        </ToolGroup>
        <ToolSep />
        <ToolBtn $fly><FaRunning size={21} /></ToolBtn>
        <ToolSep $l={3} $r={3} />
        <ToolBtn $fly><FaThumbtack size={20} /></ToolBtn>
        <ToolSep $l={38} $r={26} />
        <ToolGroup $gap={3}>
            <ToolBtn $tone="on"><AxisIcon /></ToolBtn>
            <ToolBtn><AxisIcon ring /></ToolBtn>
            <ToolBtn><Ico s={22} sw={1.5}><path d="M5 3l14 18M19 3v12M5 21V9l14-6M5 21l14-6" /></Ico></ToolBtn>
        </ToolGroup>
        <ToolSep $l={10} $r={10} />
        <ToolGroup $gap={3}>
            <ToolBtn $tone="on"><Filled s={30} d="M7 2v20l4-5 9-1z" /></ToolBtn>
            <ToolBtn><Plus size={24} strokeWidth={2} /></ToolBtn>
            <ToolBtn><Ico s={24} sw={2}><rect x="3" y="3" width="18" height="18" rx="1" /><path d="M10 11h4M14 11v5" strokeDasharray="1.5 1.5" /></Ico></ToolBtn>
            <ToolBtn><Ico s={24} sw={2.2}><path d="M6 6.5A8.5 8.5 0 1 1 6 18" /><path d="M6 2v5h5" /></Ico></ToolBtn>
        </ToolGroup>
        <ToolText $l={3}>Universal</ToolText>
        <ToolSep $l={9} $r={11} />
        <Checkbox />
        <ToolText $l={12}>Snapping</ToolText>
        <ToolBtn $l={22}><Ico s={20} sw={1.5}><path d="M3 21l8-8 5 5M12 12l8-8M20 4h-4M20 4v4" /></Ico></ToolBtn>
        <ToolBtn $tone="on" $l={3}><Ico s={18} sw={2}><path d="M4 8V4h4M16 4h4v4M20 16v4h-4M8 20H4v-4" /></Ico></ToolBtn>
        <ToolSep $l={27} $r={0} />
        <Workspaces>
            <WsTab $on $x={31}>Default</WsTab>
            <WsTab $x={96}><Burger /></WsTab>
            <WsUnderline />
            <WsTab $x={139}>Review</WsTab>
            <WsTab $x={247}>Learn</WsTab>
            <WsTab $x={345}>Small Screen</WsTab>
            <WsTab $x={490}>Standard</WsTab>
            <WsTab $x={696}><ChevronsRight size={19} strokeWidth={2.2} /></WsTab>
        </Workspaces>
    </Toolbar>
);

const Project = () => (
    <ProjectPanel>
        <TabStrip>
            <TabLabel $on $l={18}>Project</TabLabel>
            <Burger $l={14} />
            <TabLabel $l={49}>Effect Controls (none)</TabLabel>
            <TabUnderline $x={16} $w={73} />
        </TabStrip>
        <InfoRow>
            <Thumb><ThumbScale><WelcomeCard /></ThumbScale></Thumb>
            <InfoText>
                Template Settings ▾ , used 1 time<br />
                1920 x 1080 (1.00)<br />
                Δ 0:00:50:00, 30.00 fps
            </InfoText>
        </InfoRow>
        <SearchBox><SearchGlyph /></SearchBox>
        <FileHead>
            <HeadBar $x={22} />
            <HeadCell $x={31}>Name</HeadCell>
            <HeadCell $x={140} $t={9}><svg width="16" height="7"><path d="M0 7 8 0l8 7z" fill="#bbb" /></svg></HeadCell>
            <HeadBar $x={160} />
            <HeadCell $x={169} $t={3}><FaTag size={15} /></HeadCell>
            <HeadBar $x={188} />
            <HeadCell $x={198}>Type</HeadCell>
            <HeadBar $x={293} />
            <HeadCell $x={301}>Size</HeadCell>
            <HeadBar $x={358} />
            <HeadCell $x={367}>Frame Ra...</HeadCell>
            <HeadBar $x={426} />
        </FileHead>
        <FileList>
            {files.map((f) => (
                <FileRow key={f.name || 'root'} $sel={f.sel}>
                    <FileCell $p={2}>{f.kind === 'folder' && <ChevronRight size={16} strokeWidth={3} />}</FileCell>
                    <FileCell $center>
                        {f.kind === 'file' ? <FileIcon /> : f.kind === 'folder' ? <FolderIcon /> : <CompIcon />}
                    </FileCell>
                    <FileName $sel={f.sel}>{f.name}</FileName>
                    <span />
                    <Swatch $c={f.color} $dark={f.sel} />
                    <span />
                    <span>{f.type}</span>
                    <span>{f.size}</span>
                    <span>{f.fr}</span>
                </FileRow>
            ))}
        </FileList>
        <HierIcon><FaSitemap size={17} /></HierIcon>
        <ProjectFoot>
            <Ico s={22} fill="currentColor"><path d="M2 6h20v11H6v2H2zM8 9v2h10V9z" /></Ico>
            <Folder size={20} fill="currentColor" strokeWidth={1} />
            <CompIcon />
            <FaRocket size={17} />
            <BpcBox>8 bpc</BpcBox>
            <Trash2 size={21} strokeWidth={1.6} />
            <PillSlider />
        </ProjectFoot>
    </ProjectPanel>
);

const Composition = () => (
    <CompPanel>
        <CompHead>
            <X size={13} strokeWidth={1.6} />
            <TlSwatch $l={11} />
            <LockOpen size={15} strokeWidth={2.2} style={{ marginLeft: 13 }} />
            <TabLabel $on $l={10}>Composition Phone Model</TabLabel>
            <Burger $l={14} />
        </CompHead>
        <Crumbs>
            <CrumbChip>Phone Model <ChevronLeft size={15} strokeWidth={2.8} /></CrumbChip>
            <BarText $l={14}>Template Settings</BarText>
            <ChevronLeft size={15} strokeWidth={2.8} style={{ marginLeft: 16 }} />
            <BarText $l={15}>Phone Logo</BarText>
        </Crumbs>
        <RulerGap />
        <HRuler />
        <ViewRow>
            <VRuler />
            <ViewArea>
                <Canvas>
                    <CardSpot><WelcomeCard /></CardSpot>
                    <WireFrame />
                    <InsertText>INSERT<br />ANYTHING<br />HERE</InsertText>
                </Canvas>
                <CameraLabel>Active Camera (Default)</CameraLabel>
            </ViewArea>
        </ViewRow>
        <CompBar>
            <BlueNum $l={36}>84.4</BlueNum>
            <BarText $l={8}>%</BarText>
            <DarkBox $w={27} $p={0} $j="center" $l={19} $bg="#000"><Chev /></DarkBox>
            <BarSep />
            <DarkBox $w={124} $l={12}>Full <Chev /></DarkBox>
            <BarSep />
            <BarBtn $on $l={12}><Ico s={20} sw={1.6}><path d="M20 14V4H4v16h8M13 6l-4 7h4l-2 6" /></Ico></BarBtn>
            <BarBtn $on><Ico s={20} fill="currentColor"><path d="M3 3h18v18H3z" opacity=".55" /></Ico></BarBtn>
            <BarBtn $on><Ico s={22} sw={1.6}><path d="M7 4h12l3 16H3zM7 4l-1-1M19 4l1-1M3 20H2M22 20h1" /></Ico></BarBtn>
            <BarBtn><Ico s={20} sw={1.6}><rect x="3" y="3" width="18" height="18" /><rect x="8" y="8" width="8" height="8" fill="currentColor" /></Ico></BarBtn>
            <BarBtn $l={5}><Ico s={20} sw={1.6}><rect x="4" y="4" width="16" height="14" strokeDasharray="4 2" /><path d="M12 8v6M9 11h6" /></Ico></BarBtn>
            <BarSep $l={15} />
            <BarBtn $l={11}>
                <svg width="20" height="20" viewBox="0 0 20 20">
                    <circle cx="9" cy="5" r="4" fill="#e02020" />
                    <circle cx="5" cy="11" r="4" fill="#25b04a" />
                    <circle cx="11" cy="11" r="4" fill="#2a6fd8" />
                </svg>
            </BarBtn>
            <BarBtn $l={5}><Aperture size={20} strokeWidth={1.7} /></BarBtn>
            <BlueNum $l={9}>+0.0</BlueNum>
            <BarSep $l={26} />
            <BarBtn $l={11}><Camera size={20} fill="#b5b5b5" stroke="#1c1c1c" strokeWidth={1.5} /></BarBtn>
            <BarBtn $l={5}><Ico s={20} sw={1.7}><circle cx="11" cy="13" r="6" /><circle cx="15" cy="8" r="5" /></Ico></BarBtn>
            <DarkBox $w={93} $j="center" $l={24} $p={0}>0:00:00:00</DarkBox>
            <BarSep />
            <DarkBox $w={118} $j="center" $l={12} $p={0}><Box size={17} strokeWidth={1.6} />&nbsp;Draft 3D</DarkBox>
            <BarSep />
            <BarBtn $l={12}><Ico s={20} sw={1.4}><path d="M7 4h10l4 16H3zM12 4v16M5 12h14" /></Ico></BarBtn>
            <BarBtn $l={5}><Ico s={20} sw={1.6}><rect x="3" y="3" width="18" height="18" /><rect x="7" y="7" width="10" height="10" /></Ico></BarBtn>
            <DarkBox $w={114} $l={26} $bg="#050505" $p={6}>Advanced...<Chev /></DarkBox>
        </CompBar>
    </CompPanel>
);

const LayerTimeline = () => (
    <Timeline>
        <TabStrip $h={32}>
            <X size={12} strokeWidth={1.6} style={{ marginLeft: 15 }} />
            <TlSwatch $l={9} />
            <TabLabel $on $l={15}>Phone Model</TabLabel>
            <Burger $l={14} />
            <TlSwatch $l={50} />
            <TabLabel $l={17}>Template Settings</TabLabel>
            <TlSwatch $l={75} />
            <TabLabel $l={15}>Phone Logo</TabLabel>
            <TlSwatch $l={77} />
            <TabLabel $l={15}>Screen Composition</TabLabel>
            <TabLabel $l={77}>Render Queue</TabLabel>
            <TabUnderline $x={16} $w={158} />
        </TabStrip>
        <TlBody>
            <TlLeft>
                <TimeRow>
                    <TimeBlock>
                        <BigTime>0:00:00:00</BigTime>
                        <SubTime>00000 (30.00 fps)</SubTime>
                    </TimeBlock>
                    <SearchBox $m="0" $w={554}><SearchGlyph /></SearchBox>
                    <Sect $w={188} $p={16} $gap={12}>
                        <Ico s={20} sw={1.5}><path d="M2 6h10v4H2zM12 8h6v10M14 18h8M8 14h8" /></Ico>
                        <ShyIcon />
                        <Ico s={20} sw={1.7}><rect x="6" y="3" width="14" height="14" /><path d="M3 7v14h14" /></Ico>
                        <Ico s={20} sw={1.5}><circle cx="13" cy="10" r="7" /><path d="M5 12a7 7 0 0 0 8 8M4 8a7 7 0 0 0 0 6" /></Ico>
                        <Ico s={21} sw={1.4}><rect x="3" y="3" width="18" height="18" strokeDasharray="3 1" /><path d="M7 7c5 0 4 10 10 10" /></Ico>
                    </Sect>
                </TimeRow>
                <ColHead>
                    <Sect $w={97} $p={9} $gap={6}>
                        <Eye size={15} strokeWidth={2} />
                        <Volume2 size={15} fill="currentColor" />
                        <Swatch $c="#b0b0b0" $w={9} $h={9} $round />
                        <Lock size={14} fill="currentColor" />
                    </Sect>
                    <Sect $w={41} $p={17}><FaTag size={15} /></Sect>
                    <Sect $w={48} $p={10}>#</Sect>
                    <Sect $w={179} $p={4}>Layer Name</Sect>
                    <Sect $w={190} $gap={4}>
                        <ShyIcon />
                        <Aperture size={14} />
                        <Ico s={14} sw={2.4}><path d="M3 3l18 18" strokeDasharray="3 3" /></Ico>
                        <Fx>fx</Fx>
                        <Ico s={16} sw={1.6}><rect x="3" y="3" width="18" height="18" /><path d="M8 3v18M3 9h5M3 15h5" /></Ico>
                        <Ico s={18} fill="#888"><circle cx="13" cy="10" r="8" /><circle cx="9" cy="14" r="7" opacity=".6" /></Ico>
                        <Ico s={15} sw={2}><circle cx="12" cy="12" r="9" /><path d="M12 3a9 9 0 0 0 0 18z" fill="currentColor" /></Ico>
                        <Box size={15} strokeWidth={1.6} />
                    </Sect>
                    <Sect $w={158} $p={2}>Parent &amp; Link</Sect>
                    <Sect $w={120}>Render Time</Sect>
                </ColHead>
                {layers.map((l) => (
                    <LayerRow key={l.n}>
                        <Sect $w={97} $p={8}>
                            <Eye size={17} strokeWidth={2.6} color="#d0d0d0" />
                            <Slot $l={25} />
                            <Slot $l={3} />
                        </Sect>
                        <Sect $w={41}>
                            <ChevronRight size={15} strokeWidth={2.6} />
                            <Swatch $c={l.color} $w={16} $h={19} $l={6} />
                        </Sect>
                        <Sect $w={48} $p={11}>{l.n}</Sect>
                        <Sect $w={179} $gap={l.grid ? 3 : 6}>
                            {l.solid ? <Swatch $c="#fff" $w={18} $h={18} $dark /> : <CompIcon w={20} h={18} />}
                            {l.grid && <Ico s={18} sw={1.8}><path stroke="#45c4c4" d="M8 2v20M16 2v20M2 8h20M2 16h20" /></Ico>}
                            <LayerName $l={l.grid ? 1 : 0}>{l.name}</LayerName>
                        </Sect>
                        <Sect $w={188}>
                            <ShyIcon />
                            <Slot $l={4} />
                            <Slot $l={3}><SlashIcon /></Slot>
                            <Slot $l={44} />
                            <Slot $l={3} />
                            <Slot $l={3} $boxed={l.mode === 'cube'}>
                                {l.mode === 'axis' && <AxisIcon />}
                                {l.mode === 'cube' && <Box size={13} strokeWidth={1.6} />}
                            </Slot>
                        </Sect>
                        <SpiralIcon />
                        <NoneSelect>None <Chev s={15} /></NoneSelect>
                    </LayerRow>
                ))}
            </TlLeft>
            <Graph>
                <GraphTrack>
                    <NavShelf>
                        <NavStrip>
                            <NavFill />
                            <NavHandle $x={-2} />
                            <NavHandle $x={524} $r />
                        </NavStrip>
                    </NavShelf>
                    <TimeLabels>
                        {['00s', '05s', '10s', '15s', '20s', '25s', '30s', '35s'].map((t, i) => <TimeLabel key={t} $first={i === 0}>{t}</TimeLabel>)}
                    </TimeLabels>
                    <WorkBar />
                    <GreenBar />
                    <LayerBar $c="#77373a" />
                    <LayerBar $c="#6b6352" $round />
                    <LayerBar $c="#6b6352" $round />
                </GraphTrack>
                <Playhead />
                <PlayheadCap width="17" height="21" viewBox="0 0 17 21"><path d="M0 0h15v9l-7 12-8-12z" fill="#3f97f0" /></PlayheadCap>
                <SideMarks>
                    <Marker />
                    <Ico s={20} sw={1.6}><path d="M8 3 2 15M8 3v12M2 15h6" /><rect x="10" y="7" width="10" height="9" fill="currentColor" /><circle cx="8" cy="18" r="4" /></Ico>
                </SideMarks>
            </Graph>
        </TlBody>
        <TlFoot>
            <FootLeft>
                <FootBtn $on $l={8}><Ico s={17} sw={1.7}><rect x="3" y="3" width="13" height="13" /><rect x="8" y="8" width="13" height="13" /></Ico></FootBtn>
                <FootBtn $l={7}><Ico s={18} sw={1.7}><circle cx="10" cy="9" r="7" /><rect x="10" y="12" width="10" height="9" /></Ico></FootBtn>
                <FootBtn $l={5}>{'{ }'}</FootBtn>
                <FootBtn $on $l={5}><FaRunning size={14} /></FootBtn>
                <BarText $l={37}>Frame Render Time:</BarText>
                <GreenNum>0ms</GreenNum>
                <BarText $l={59}>Toggle Switches / Modes</BarText>
                <ZoomSmall width="14" height="8"><path d="M0 8 7 0l7 8z" fill="#b5b5b5" /></ZoomSmall>
                <ZoomTrack $w={15} $l={10} />
                <ZoomKnob />
                <ZoomTrack $w={38} />
                <ZoomBig width="24" height="14"><path d="M0 14 6 5l4 9zM6 14 15 0l9 14z" fill="#b5b5b5" /></ZoomBig>
            </FootLeft>
            <ScrollPill />
        </TlFoot>
    </Timeline>
);

const Dock = () => (
    <RightDock>
        <DockSection $h={469} $p={9}>
            <PanelHead $p={8}>
                <PanelHeadLeft>Preview<Burger $l={14} /></PanelHeadLeft>
            </PanelHead>
            <Transport>
                {transportPaths.map((d) => (
                    <Ico key={d} s={18} fill="currentColor"><path d={d} stroke="currentColor" strokeWidth="1.5" /></Ico>
                ))}
            </Transport>
            <Rule $w={264} />
            <Label $mt={10}>Shortcut</Label>
            <FlexRow $h={27} $mt={2}>
                <PickBox $w={226} $h={27}>Spacebar <Chev /></PickBox>
                <Undo2 size={20} strokeWidth={2} style={{ marginLeft: 15 }} />
            </FlexRow>
            <FlexRow $h={32} $mt={2}>
                <RowCaption $w={128} $t={5}>Include:</RowCaption>
                <ToggleBtn $on><Eye size={20} strokeWidth={2} /></ToggleBtn>
                <ToggleBtn $on $l={3}><Volume2 size={20} fill="currentColor" strokeWidth={1.4} /></ToggleBtn>
                <ToggleBtn $l={3}><Ico s={22} sw={1.7}><rect x="4" y="4" width="16" height="16" strokeDasharray="13 2" /><circle cx="12" cy="12" r="1" /></Ico></ToggleBtn>
                <ToggleBtn $l={10}><Ico s={20} sw={2.2}><path d="M4 10v10h16v-7M10 14c0-5 3-7 7-7M14 3l5 4-5 4" /></Ico></ToggleBtn>
            </FlexRow>
            <FlexRow $h={32}><Checkbox /><CheckLabel>Cache Before Playback</CheckLabel></FlexRow>
            <Label $mt={3}>Range</Label>
            <PickBox $w={264} $h={25} $mt={4.5}>Work Area Extended By Current... <Chev /></PickBox>
            <Label $mt={8}>Play From</Label>
            <PickBox $w={264} $h={25} $mt={4}>Current Time <Chev /></PickBox>
            <FlexRow $h={18} $mt={8}>
                <RowCaption $w={95}>Frame Rate</RowCaption>
                <RowCaption $w={69}>Skip</RowCaption>
                <span>Resolution</span>
            </FlexRow>
            <FlexRow $h={25} $mt={3}>
                <SplitBox $w={91} $left={60}><SplitValue>(30)</SplitValue><SplitArrow><Chev /></SplitArrow></SplitBox>
                <SplitBox $w={62} $left={31} $l={5}><SplitValue $bg="#000">0</SplitValue><SplitArrow><Chev /></SplitArrow></SplitBox>
                <PickBox $w={99} $h={25} $l={6}>Auto <Chev /></PickBox>
            </FlexRow>
            <FlexRow $mt={1.5}><Checkbox /><CheckLabel>Full Screen</CheckLabel></FlexRow>
            <Rule $w={264} $mt={6} />
            <Label $mt={10}>On (Spacebar) Stop:</Label>
            <FlexRow $mt={1}><Checkbox /><CheckLabel>If caching, play cached frames</CheckLabel></FlexRow>
            <FlexRow><Checkbox $on><Check size={13} strokeWidth={3.5} /></Checkbox><CheckLabel>Move time to preview time</CheckLabel></FlexRow>
        </DockSection>
        <DockSection $grow>
            <LowerDock>
                <PanelHead>Properties: No Selection<Burger /></PanelHead>
                <Rule $mt={30} />
                <PanelHead $h={36}>Align<Burger /></PanelHead>
                <Indent>
                    <FlexRow $h={32} $mt={9}>
                        <span>Align Layers to:</span>
                        <MutedSelect>Selection <Chev /></MutedSelect>
                    </FlexRow>
                    <AlignIcons>
                        {alignPaths.map((d) => (
                            <Ico key={d} s={23} fill="currentColor"><path d={d} stroke="currentColor" strokeWidth="1" /></Ico>
                        ))}
                    </AlignIcons>
                    <Rule $w={264} $mt={13} />
                    <Label $mt={15}>Distribute Layers:</Label>
                </Indent>
                <Rule $mt={3} />
                <PanelHead $h={33} $dim>Audio</PanelHead>
                <Rule $t={2} />
                <PanelHead $h={33}>Effects &amp; Presets<Burger /></PanelHead>
                <SearchBox $m="3px 6px 0 8px" $p={10}><SearchGlyph /></SearchBox>
                <Rule $t={3} $mt={5} />
                <PresetStrip>
                    <svg width="17" height="17" viewBox="0 0 17 17"><path d="M0 0h17v17H7v-7H0z" fill="#bdbdbd" /><path d="M0 11h6v6z" fill="#bdbdbd" /></svg>
                </PresetStrip>
                <Rule $t={2} />
                <PanelHead $h={33} $dim>Tracker</PanelHead>
                <Rule $t={3} />
                <PanelHead $h={32}>Brushes<Burger /></PanelHead>
                <BrushGrid>
                    {brushes.map((b, i) => (
                        <BrushCell key={i} $sel={b.sel}>
                            <BrushDot $w={b.w} $h={b.h} $rot={b.rot} $soft={b.soft} />
                            <BrushNum $sel={b.sel}>{b.n}</BrushNum>
                        </BrushCell>
                    ))}
                </BrushGrid>
                <DiameterRow>Diameter: 13 px<DiameterBox /></DiameterRow>
            </LowerDock>
            <ScrollThumb />
        </DockSection>
    </RightDock>
);

function App() {
    return (
        <Window>
            <GlobalStyle />
            <TopToolbar />
            <Workspace>
                <LeftStack>
                    <TopRow>
                        <Project />
                        <Composition />
                    </TopRow>
                    <LayerTimeline />
                </LeftStack>
                <Dock />
            </Workspace>
        </Window>
    );
}

export default App;
